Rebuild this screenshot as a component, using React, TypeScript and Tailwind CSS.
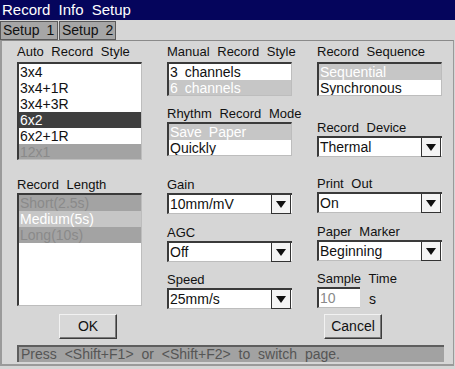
import React from "react";

const FONT = "font-['Liberation_Sans',Arial,sans-serif]";

type Item = { text: string; state?: "normal" | "selected" | "disabled" | "dim" };

function Label({ children }: { children: React.ReactNode }) {
  return (
    <div className="h-[16px] text-[13px] leading-[16px] text-[#111] [word-spacing:4px] whitespace-nowrap">
      {children}
    </div>
  );
}

function ListBox({ items, height }: { items: Item[]; height: number }) {
  return (
    <div
      className="bg-white border-t-2 border-l-2 border-t-[#3a3a3a] border-l-[#3a3a3a] border-r border-b border-r-[#bdbdbd] border-b-[#bdbdbd] overflow-hidden"
      style={{ height }}
    >
      {items.map((it) => (
        <div
          key={it.text}
          className={
            "h-[16px] pl-[1px] text-[14px] leading-[16px] whitespace-nowrap [word-spacing:3px] " +
            (it.state === "selected"
              ? "bg-[#3f3f3f] text-white"
              : it.state === "disabled"
              ? "bg-[#a3a3a3] text-[#8a8a8a]"
              : it.state === "dim"
              ? "bg-[#c6c6c6] text-white"
              : "text-[#111]")
          }
        >
          {it.text}
        </div>
      ))}
    </div>
  );
}

function Dropdown({ value }: { value: string }) {
  return (
    <div className="flex h-[21px] bg-white border-t-2 border-l-2 border-t-[#3a3a3a] border-l-[#3a3a3a] border-b border-b-[#bdbdbd]">
      <div className="flex-1 pl-[1px] text-[14px] leading-[18px] text-[#111]">{value}</div>
      <div className="w-[20px] h-[19px] mr-[1px] border border-[#333] border-t-0 bg-[#f4f4f4] flex items-center justify-center">
        <svg width="10" height="7" viewBox="0 0 10 7">
          <polygon points="0,0 10,0 5,7" fill="#111" />
        </svg>
      </div>
    </div>
  );
}

function Button({ children }: { children: React.ReactNode }) {
  return (
    <div className="w-[58px] h-[25px] bg-[#d8d8d8] border border-t-[#f2f2f2] border-l-[#f2f2f2] border-r-[#3c3c3c] border-b-[#3c3c3c] shadow-[inset_-1px_-1px_0_#7a7a7a] flex items-center justify-center text-[14px] text-[#111]">
      {children}
    </div>
  );
}

export default function App() {
  return (
    <div className={`${FONT} w-[455px] h-[369px] bg-[#d6d6d6] flex flex-col`}>
      {/* Title bar */}
      <div className="h-[20px] bg-[#05055c] text-white text-[15px] leading-[20px] pl-[2px] [word-spacing:4px]">
        Record Info Setup
      </div>

      {/* Tabs */}
      <div className="h-[20px] flex gap-[1px] pt-[1px] bg-[#d6d6d6]">
        <div className="w-[58px] h-[19px] bg-[#a6a6a6] border border-[#5a5a5a] text-[14px] leading-[17px] pl-[2px] text-[#111] [word-spacing:3px]">
          Setup 1
        </div>
        <div className="w-[57px] h-[19px] bg-[#a6a6a6] border border-[#5a5a5a] text-[14px] leading-[17px] pl-[2px] text-[#111] [word-spacing:3px]">
          Setup 2
        </div>
      </div>

      {/* Panel */}
      <div className="h-[326px] mr-[1px] border-t border-l-2 border-r border-b-2 border-t-[#8a8a8a] border-l-[#9a9a9a] border-r-[#9a9a9a] border-b-[#9a9a9a] pl-[15px] pt-[3px] flex flex-col">
        <div className="grid grid-cols-[125px_125px_125px] gap-x-[25px]">
          {/* Column 1 */}
          <div className="flex flex-col">
            <Label>Auto Record Style</Label>
            <div className="mt-[2px]">
              <ListBox
                height={98}
                items={[
                  { text: "3x4" },
                  { text: "3x4+1R" },
                  { text: "3x4+3R" },
                  { text: "6x2", state: "selected" },
                  { text: "6x2+1R" },
                  { text: "12x1", state: "disabled" },
                ]}
              />
            </div>
            <div className="mt-[17px]">
              <Label>Record Length</Label>
            </div>
            <ListBox
              height={113}
              items={[
                { text: "Short(2.5s)", state: "disabled" },
                { text: "Medium(5s)", state: "dim" },
                { text: "Long(10s)", state: "disabled" },
              ]}
            />
          </div>

          {/* Column 2 */}
          <div className="flex flex-col">
            <Label>Manual Record Style</Label>
            <div className="mt-[2px]">
              <ListBox
                height={34}
                items={[{ text: "3 channels" }, { text: "6 channels", state: "dim" }]}
              />
            </div>
            <div className="mt-[10px]">
              <Label>Rhythm Record Mode</Label>
            </div>
            <ListBox
              height={34}
              items={[{ text: "Save Paper", state: "dim" }, { text: "Quickly" }]}
            />
            <div className="mt-[21px]">
              <Label>Gain</Label>
            </div>
            <Dropdown value="10mm/mV" />
            <div className="mt-[11px]">
              <Label>AGC</Label>
            </div>
            <Dropdown value="Off" />
            <div className="mt-[10px]">
              <Label>Speed</Label>
            </div>
            <Dropdown value="25mm/s" />
          </div>

          {/* Column 3 */}
          <div className="flex flex-col">
            <Label>Record Sequence</Label>
            <div className="mt-[2px]">
              <ListBox
                height={34}
                items={[{ text: "Sequential", state: "dim" }, { text: "Synchronous" }]}
              />
            </div>
            <div className="mt-[24px]">
              <Label>Record Device</Label>
            </div>
            <Dropdown value="Thermal" />
            <div className="mt-[19px]">
              <Label>Print Out</Label>
            </div>
            <Dropdown value="On" />
            <div className="mt-[11px]">
              <Label>Paper Marker</Label>
            </div>
            <Dropdown value="Beginning" />
            <div className="mt-[10px]">
              <Label>Sample Time</Label>
            </div>
            <div className="flex items-end gap-[9px]">
              <div className="w-[43px] h-[21px] bg-white border-t-2 border-l-2 border-t-[#3a3a3a] border-l-[#3a3a3a] border-b border-b-[#bdbdbd] pl-[1px] text-[14px] leading-[18px] text-[#8a8a8a]">
                10
              </div>
              <div className="text-[14px] leading-[18px] text-[#111]">s</div>
            </div>
          </div>
        </div>

        {/* Buttons */}
        <div className="flex mt-[5px] pl-[42px] gap-[207px]">
          <Button>OK</Button>
          <Button>Cancel</Button>
        </div>

        {/* Status bar */}
        <div className="mt-[6px] w-[427px] h-[17px] bg-[#a2a2a2] border-t-2 border-l-2 border-t-[#5e5e5e] border-l-[#5e5e5e] pl-[2px] text-[14px] leading-[15px] text-[#555] [word-spacing:4px] whitespace-nowrap">
          Press &lt;Shift+F1&gt; or &lt;Shift+F2&gt; to switch page.
        </div>
      </div>
    </div>
  );
}
